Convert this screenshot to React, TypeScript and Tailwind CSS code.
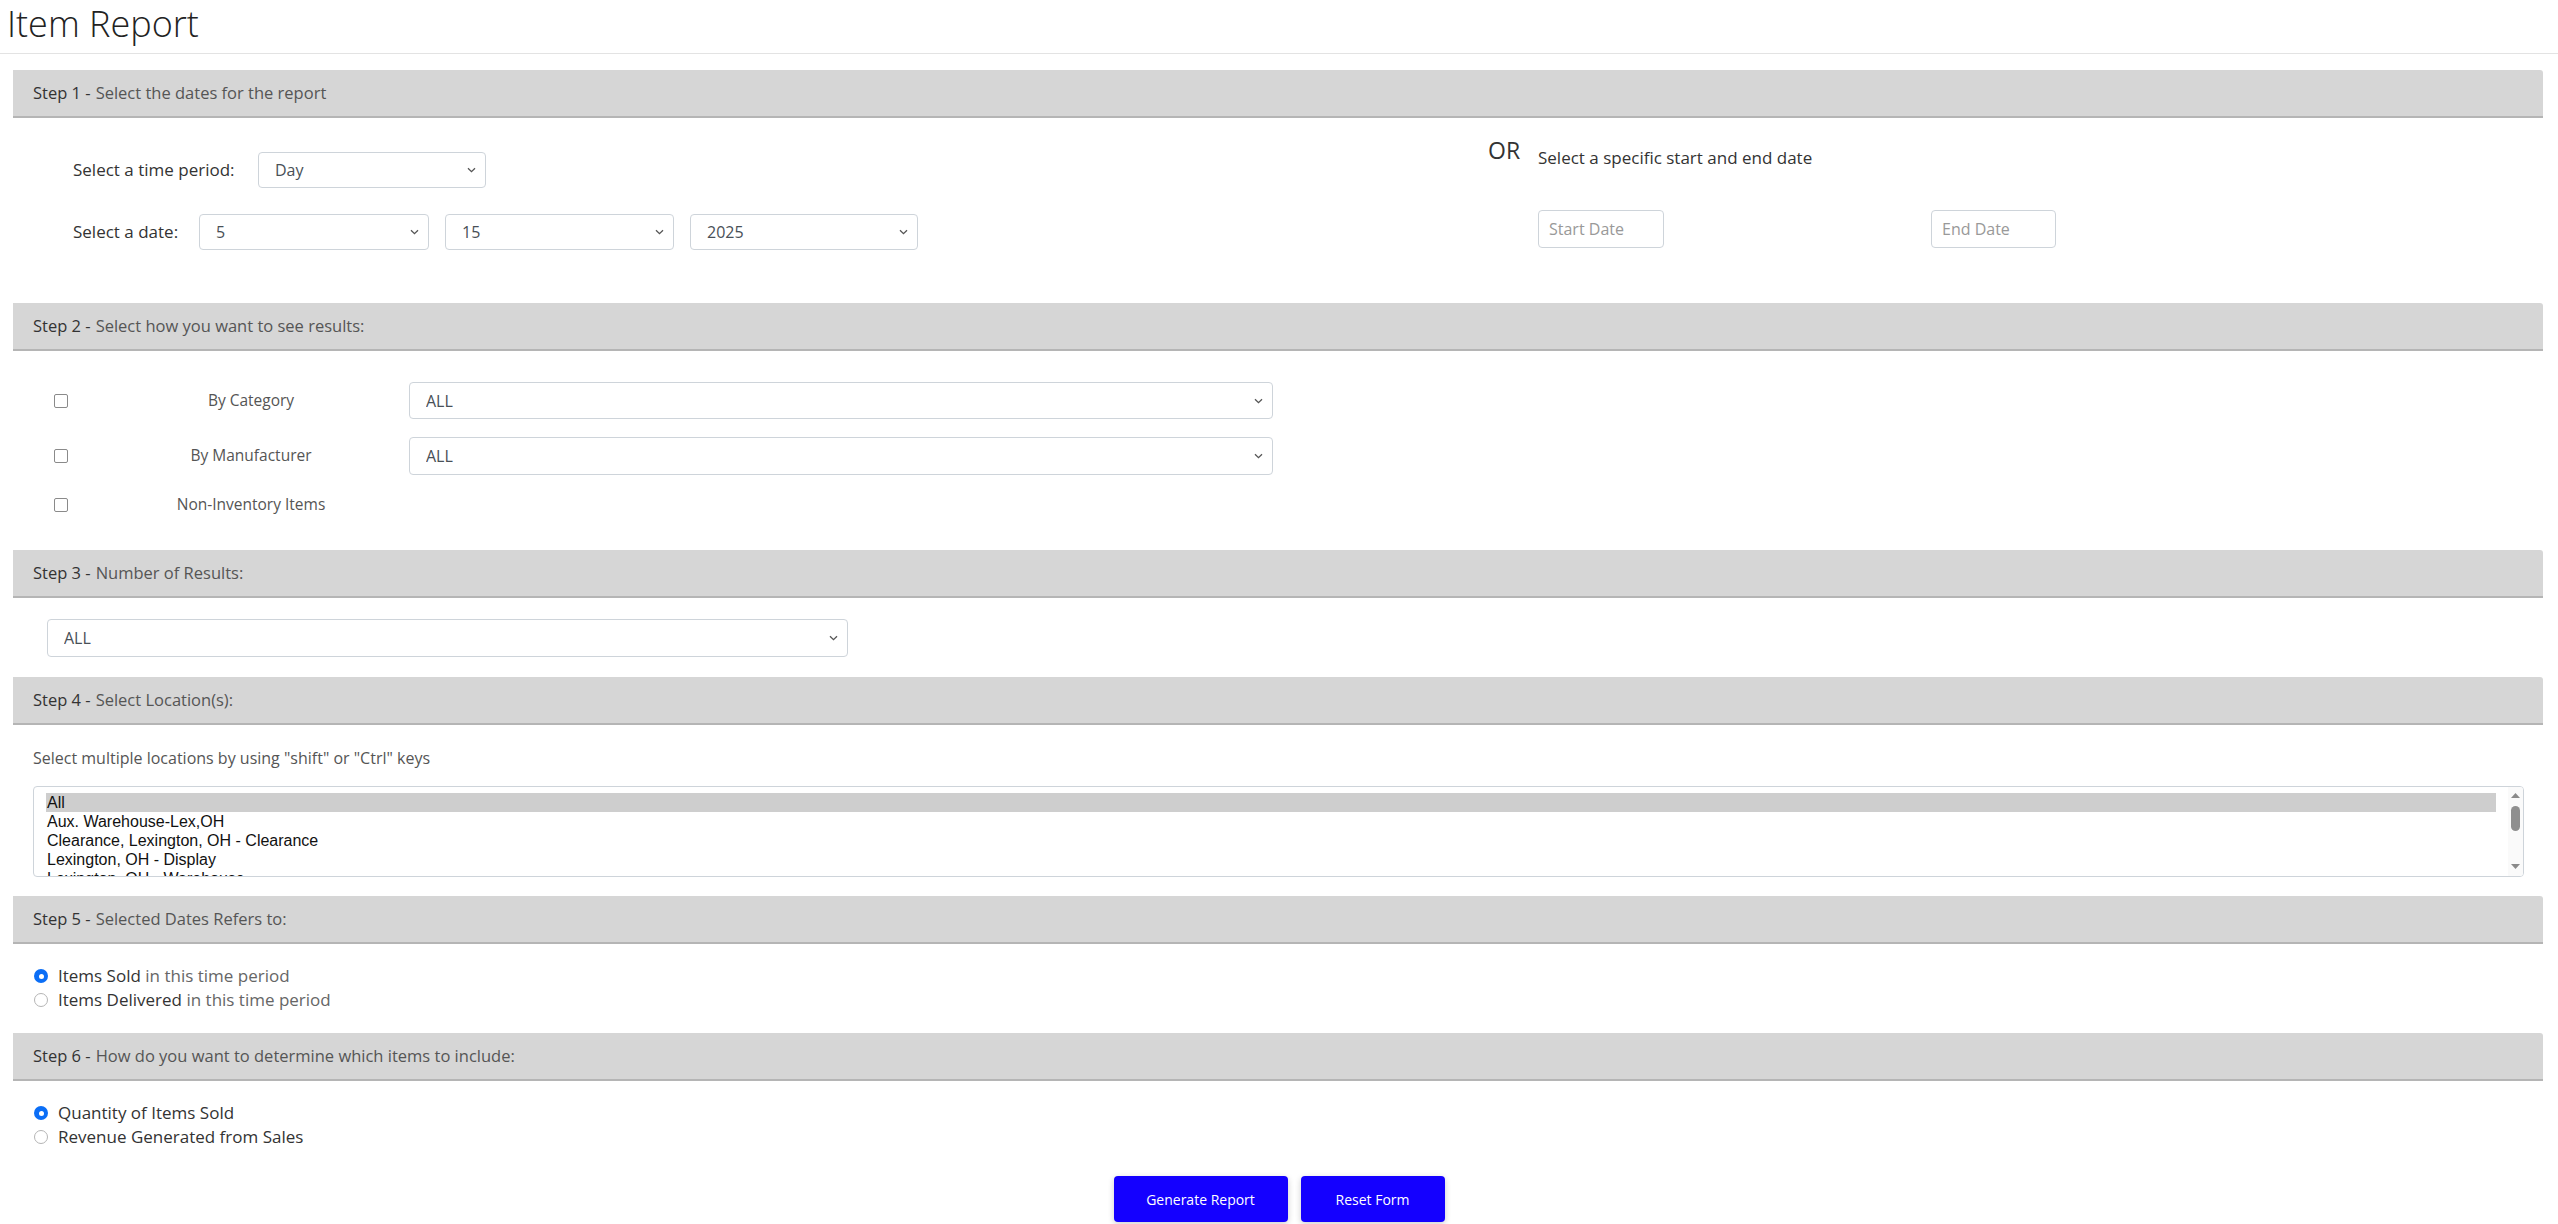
import React from 'react'

const LOCATIONS = [
  'All',
  'Aux. Warehouse-Lex,OH',
  'Clearance, Lexington, OH - Clearance',
  'Lexington, OH - Display',
  'Lexington, OH - Warehouse',
]

function StepHeader({ n, text }: { n: number; text: string }) {
  return (
    <div className="h-[48px] bg-[#d6d6d6] border-b-2 border-[#b5b5b5] rounded-tr-[3px] pl-[20px] flex items-center text-[16.5px] text-[#555]">
      <span className="text-[#333]">Step {n} -</span>
      <span className="ml-[5px]">{text}</span>
    </div>
  )
}

function Chevron() {
  return (
    <svg
      className="absolute right-[10px] top-1/2 -translate-y-1/2 pointer-events-none"
      width="9"
      height="6"
      viewBox="0 0 9 6"
      aria-hidden="true"
    >
      <path d="M1 1.2l3.5 3.5 3.5-3.5" stroke="#555" strokeWidth="1.3" fill="none" />
    </svg>
  )
}

function Dropdown({ value, className }: { value: string; className: string }) {
  return (
    <div className={`relative ${className}`}>
      <select
        defaultValue={value}
        className="w-full h-full appearance-none border border-[#ced4da] rounded-[4px] bg-white pl-[16px] text-[16px] text-[#495057] outline-none"
      >
        <option>{value}</option>
      </select>
      <Chevron />
    </div>
  )
}

function Checkbox() {
  return <span className="w-[14px] h-[14px] shrink-0 border border-[#8a8a8a] rounded-[2px] bg-white" />
}

function Radio({ checked, strong, rest }: { checked?: boolean; strong: string; rest?: string }) {
  return (
    <label className="h-[24px] flex items-center gap-[10px] text-[17px]">
      {checked ? (
        <span className="w-[14px] h-[14px] rounded-full bg-[#0b6ef6] flex items-center justify-center">
          <span className="w-[5px] h-[5px] rounded-full bg-white" />
        </span>
      ) : (
        <span className="w-[14px] h-[14px] rounded-full border border-[#b5b5b5] bg-white" />
      )}
      <span className="text-[#333]">
        {strong}
        {rest && <span className="text-[#666]"> {rest}</span>}
      </span>
    </label>
  )
}

function LocationList() {
  return (
    <div className="mt-[17px] h-[91px] border border-[#ced4da] rounded-[4px] flex overflow-hidden bg-white">
      <div className="flex-1 pt-[6px] pl-[12px] pr-[12px] font-['Liberation_Sans',Arial,sans-serif] text-[16px] text-[#111] overflow-hidden">
        {LOCATIONS.map((loc, i) => (
          <div
            key={loc}
            className={i === 0 ? 'h-[19px] leading-[19px] pl-[1px] bg-[#cecece]' : 'h-[19px] leading-[19px] pl-[1px]'}
          >
            {loc}
          </div>
        ))}
      </div>
      {/* scrollbar */}
      <div className="w-[15px] bg-[#fafafa] flex flex-col items-center pt-[6px] pb-[7px]">
        <svg width="9" height="5" viewBox="0 0 9 5" aria-hidden="true">
          <path d="M4.5 0L9 5H0z" fill="#8a8a8a" />
        </svg>
        <span className="mt-[8px] w-[9px] h-[25px] rounded-full bg-[#8f8f8f]" />
        <span className="flex-1" />
        <svg width="9" height="5" viewBox="0 0 9 5" aria-hidden="true">
          <path d="M0 0h9L4.5 5z" fill="#8a8a8a" />
        </svg>
      </div>
    </div>
  )
}

export default function App() {
  return (
    <div className="w-[2558px] h-[1224px] overflow-hidden bg-white font-['Open_Sans',sans-serif] text-[#333]">
      {/* Title */}
      <div className="h-[54px] border-b border-[#e3e3e3] pl-[7px] pt-[2px]">
        <h1 className="text-[36px] leading-[44px] font-light text-[#222]">Item Report</h1>
      </div>

      <div className="ml-[13px] mr-[15px] mt-[16px]">
        {/* Step 1 */}
        <StepHeader n={1} text="Select the dates for the report" />
        <div className="h-[185px] flex">
          <div className="w-[1475px] pl-[60px] pt-[34px] flex flex-col gap-[26px] text-[17px]">
            <div className="flex items-center h-[36px]">
              <span className="w-[185px]">Select a time period:</span>
              <Dropdown value="Day" className="w-[228px] h-[36px]" />
            </div>
            <div className="flex items-center h-[36px]">
              <span className="w-[126px]">Select a date:</span>
              <div className="flex gap-[16px]">
                <Dropdown value="5" className="w-[230px] h-[36px]" />
                <Dropdown value="15" className="w-[229px] h-[36px]" />
                <Dropdown value="2025" className="w-[228px] h-[36px]" />
              </div>
            </div>
          </div>
          <div className="flex pt-[20px]">
            <span className="w-[50px] text-[23px] leading-[24px] text-[#333]">OR</span>
            <div className="flex flex-col">
              <span className="text-[17px] leading-[22px] mt-[9px]">Select a specific start and end date</span>
              <div className="flex gap-[267px] mt-[41px]">
                <input
                  placeholder="Start Date"
                  className="w-[126px] h-[38px] border border-[#ced4da] rounded-[4px] pl-[10px] text-[16px] placeholder:text-[#999] outline-none"
                />
                <input
                  placeholder="End Date"
                  className="w-[125px] h-[38px] border border-[#ced4da] rounded-[4px] pl-[10px] text-[16px] placeholder:text-[#999] outline-none"
                />
              </div>
            </div>
          </div>
        </div>

        {/* Step 2 */}
        <StepHeader n={2} text="Select how you want to see results:" />
        <div className="h-[199px] pt-[31px] pl-[41px] flex flex-col gap-[18px] text-[15.5px] text-[#555]">
          <div className="flex items-center h-[37px]">
            <Checkbox />
            <span className="ml-[33px] w-[300px] text-center">By Category</span>
            <Dropdown value="ALL" className="ml-[8px] w-[864px] h-[37px]" />
          </div>
          <div className="flex items-center h-[37px]">
            <Checkbox />
            <span className="ml-[33px] w-[300px] text-center">By Manufacturer</span>
            <Dropdown value="ALL" className="ml-[8px] w-[864px] h-[38px]" />
          </div>
          <div className="flex items-center h-[26px]">
            <Checkbox />
            <span className="ml-[33px] w-[300px] text-center">Non-Inventory Items</span>
          </div>
        </div>

        {/* Step 3 */}
        <StepHeader n={3} text="Number of Results:" />
        <div className="h-[79px] pt-[21px] pl-[34px]">
          <Dropdown value="ALL" className="w-[801px] h-[38px]" />
        </div>

        {/* Step 4 */}
        <StepHeader n={4} text="Select Location(s):" />
        <div className="h-[171px] pt-[22px] pl-[20px] pr-[19px]">
          <p className="text-[16px] leading-[22px] text-[#555]">
            Select multiple locations by using "shift" or "Ctrl" keys
          </p>
          <LocationList />
        </div>

        {/* Step 5 */}
        <StepHeader n={5} text="Selected Dates Refers to:" />
        <div className="h-[89px] pt-[20px] pl-[21px]">
          <Radio checked strong="Items Sold" rest="in this time period" />
          <Radio strong="Items Delivered" rest="in this time period" />
        </div>

        {/* Step 6 */}
        <StepHeader n={6} text="How do you want to determine which items to include:" />
        <div className="pt-[20px] pl-[21px]">
          <Radio checked strong="Quantity of Items Sold" />
          <Radio strong="Revenue Generated from Sales" />
        </div>
      </div>

      {/* Actions */}
      <div className="mt-[27px] flex justify-center gap-[13px]">
        <button
          type="button"
          className="w-[174px] h-[46px] rounded-[4px] bg-[#1400ff] text-white text-[14px] shadow-[0_2px_6px_rgba(0,0,0,0.2)]"
        >
          Generate Report
        </button>
        <button
          type="button"
          className="w-[144px] h-[46px] rounded-[4px] bg-[#1400ff] text-white text-[14px] shadow-[0_2px_6px_rgba(0,0,0,0.2)]"
        >
          Reset Form
        </button>
      </div>
    </div>
  )
}
